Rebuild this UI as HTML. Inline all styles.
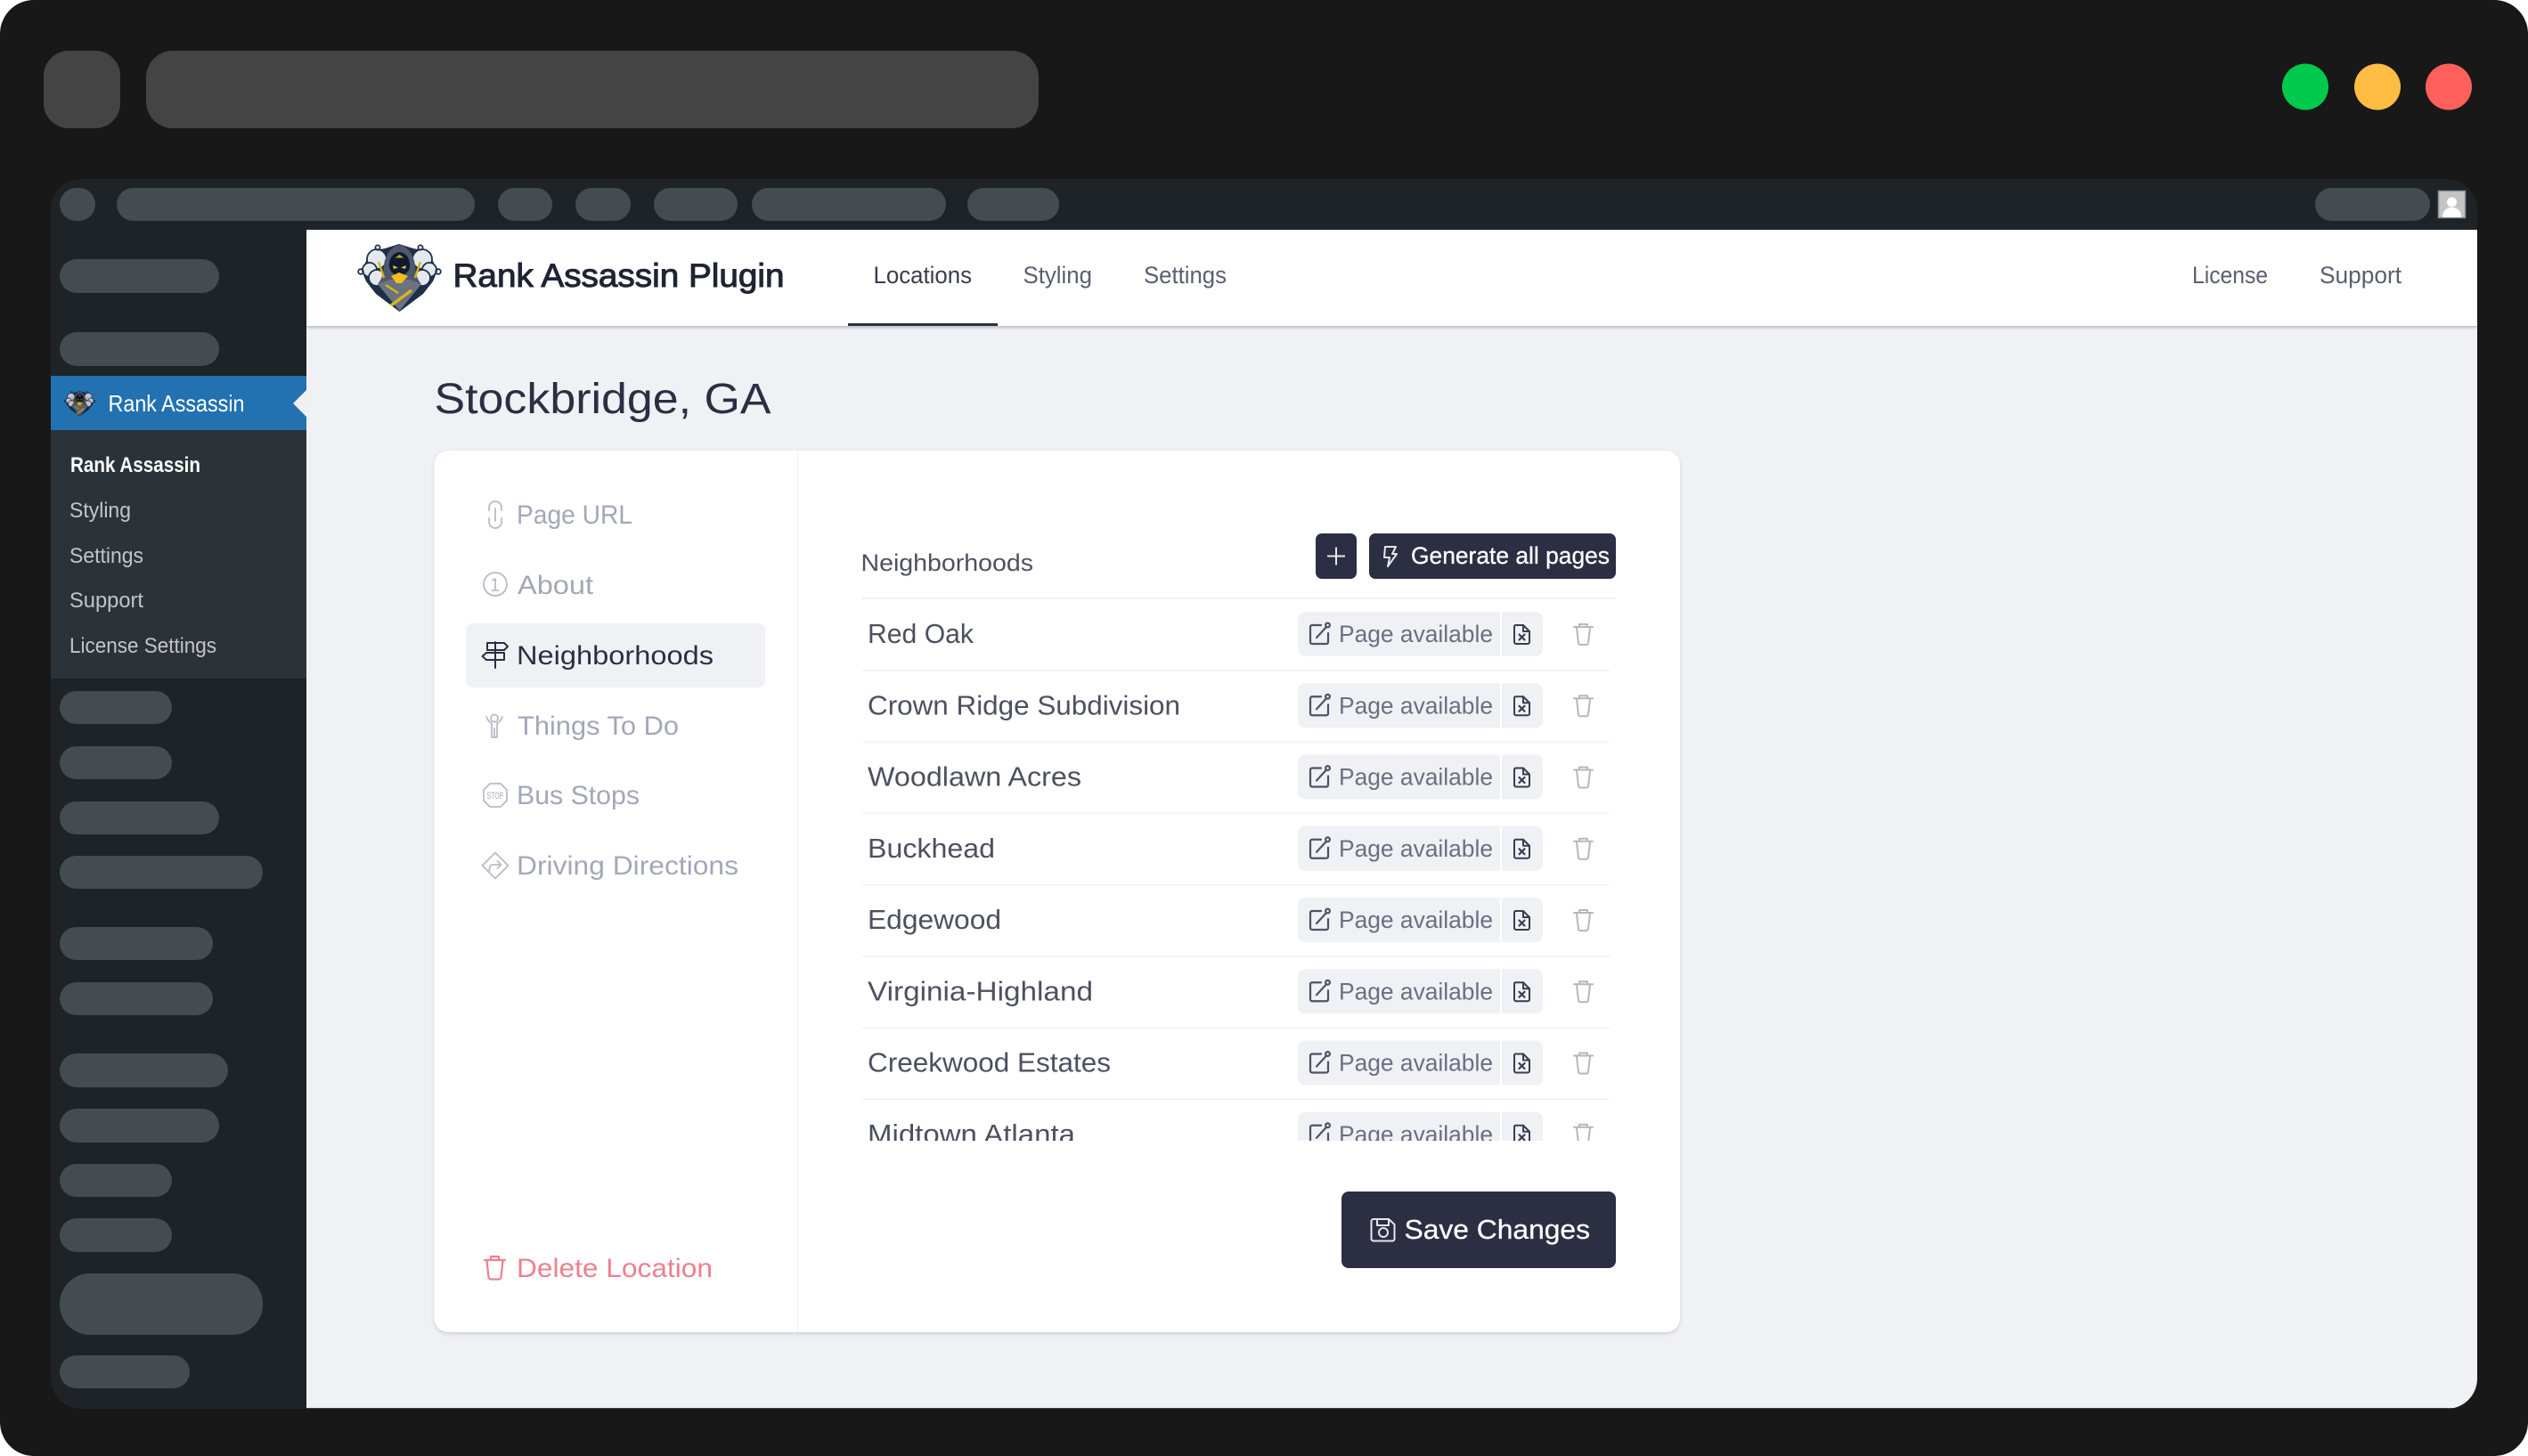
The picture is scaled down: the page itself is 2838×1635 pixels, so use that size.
<!DOCTYPE html>
<html lang="en">
<head>
<meta charset="utf-8">
<title>Rank Assassin Plugin</title>
<style>
html,body{margin:0;padding:0;background:#fff;width:2838px;height:1635px;overflow:hidden}
svg{display:block}
text{font-family:"Liberation Sans",sans-serif}
.bar{fill:#454c50}
.side{fill:#454c50}
.name{font-size:31px;fill:#4d5060}
.pa{font-size:26.500px;fill:#6b6f80}
.nav{font-size:30px;fill:#a3a7b8}
.tab{font-size:26.500px;fill:#5a5e70}
.sub{font-size:24px;fill:#c3c4c7}
.ic{fill:none;stroke-linecap:round;stroke-linejoin:round}
</style>
</head>
<body>
<svg xmlns="http://www.w3.org/2000/svg" width="2838" height="1635" viewBox="0 0 2838 1635">
<defs>
  <clipPath id="win"><rect x="57" y="201" width="2724" height="1381" rx="34"/></clipPath>
  <clipPath id="list"><rect x="960" y="660" width="860" height="621"/></clipPath>
  <filter id="sh" x="-5%" y="-5%" width="110%" height="110%"><feDropShadow dx="0" dy="2" stdDeviation="2" flood-color="#000" flood-opacity=".14"/></filter>
  <filter id="hs" x="-1%" y="-10%" width="102%" height="125%"><feDropShadow dx="0" dy="2" stdDeviation="1.500" flood-color="#000" flood-opacity=".22"/></filter>
  <filter id="dim"><feColorMatrix type="matrix" values=".68 0 0 0 0 0 .68 0 0 0 0 0 .72 0 0 0 0 0 1 0"/></filter>
  <g id="logo">
    <path d="M46.500 76L20 56 9 42 4 30 14 8 30 5 46 0 62 5 79 8 89 30 84 42 73 56Z" fill="#1e3048"/>
    <g stroke="#1e3048" stroke-width="1.800" fill="#e3e8ed">
      <circle cx="21" cy="17" r="11"/><circle cx="13" cy="29" r="8"/><circle cx="21" cy="38" r="9"/>
      <circle cx="72" cy="17" r="11"/><circle cx="80" cy="29" r="8"/><circle cx="72" cy="38" r="9"/>
    </g>
    <g fill="none" stroke="#1e3048" stroke-width="1.800"><circle cx="3" cy="31" r="2.800"/><circle cx="90" cy="31" r="2.800"/><circle cx="22" cy="4" r="2.600"/><circle cx="70" cy="4" r="2.600"/></g>
    <path d="M46.500 1C36 3 30 14 29 24 28 36 26 40 22 45L46.500 74 71 45C67 40 65 36 64 24 63 14 57 3 46.500 1Z" fill="#4f586c"/>
    <path d="M22 45L46.500 75 71 45 58 40H35Z" fill="#6b7280"/>
    <path d="M46.500 9C39 10 35 16 35 24 35 31 40 35 46.500 35 53 35 58 31 58 24 58 16 54 10 46.500 9Z" fill="#0e1a30"/>
    <path d="M39 24l6 2.500-5 1.500zM54 24l-6 2.500 5 1.500z" fill="#f1c21d"/>
    <path d="M37 36L46 32 56 36 49 44H43Z" fill="#f4bd1c"/>
    <path d="M60 52L37 69" stroke="#d9b61f" stroke-width="3.400" fill="none"/>
    <path d="M23 20l6 18M70 20l-6 18M31 46l14 9" stroke="#d9b61f" stroke-width="2.400" fill="none"/>
    <path d="M46.500 12l-5 3.500h10z" fill="#c8a818"/>
  </g>
  <g id="ext" class="ic" stroke="#4f5263" stroke-width="2.200">
    <path d="M1483 702H1473a2 2 0 0 0-2 2V721a2 2 0 0 0 2 2H1489a2 2 0 0 0 2-2V711"/>
    <path d="M1478 716L1489 704"/><circle cx="1490.500" cy="702" r="2.400"/>
  </g>
  <g id="filex" class="ic" stroke="#3a3d50" stroke-width="2">
    <path d="M1701 702H1710L1717 709V721a2 2 0 0 1-2 2H1702a2 2 0 0 1-2-2V703Z"/>
    <path d="M1710 702V709H1717"/>
    <path d="M1705.500 712.500L1711.500 718.500M1711.500 712.500L1705.500 718.500" stroke-width="2.200"/>
  </g>
  <g id="trash" class="ic" stroke="#b5b6c0" stroke-width="2">
    <path d="M1767 704H1788M1773 703.500V701H1782V703.500"/>
    <path d="M1770 705L1772 722a2 2 0 0 0 2 2H1781a2 2 0 0 0 2-2L1785 705"/>
  </g>
  <g id="pill">
    <rect x="1457" y="687" width="275" height="50" rx="8" fill="#f0f1f5"/>
    <rect x="1684" y="687" width="2" height="50" fill="#fff"/>
  </g>
</defs>

<rect width="2838" height="1635" rx="38" fill="#181818"/>

<rect x="49" y="57" width="86" height="87" rx="28" fill="#444"/>
<rect x="164" y="57" width="1002" height="87" rx="30" fill="#444"/>
<circle cx="2588" cy="97.500" r="26" fill="#00ca4e"/>
<circle cx="2669" cy="97.500" r="26" fill="#ffbd44"/>
<circle cx="2749" cy="97.500" r="26" fill="#ff605c"/>

<g clip-path="url(#win)">
  <rect x="57" y="201" width="2724" height="1381" fill="#1d2327"/>
  <rect x="344" y="258" width="2437" height="1324" fill="#f0f1f5"/>
  <rect x="344" y="1581" width="2437" height="1" fill="#3c3f44"/>

  <!-- admin bar -->
  <rect class="bar" x="67" y="211" width="40" height="37" rx="18.500"/>
  <rect class="bar" x="131" y="211" width="402" height="37" rx="18.500"/>
  <rect class="bar" x="559" y="211" width="61" height="37" rx="18.500"/>
  <rect class="bar" x="646" y="211" width="62" height="37" rx="18.500"/>
  <rect class="bar" x="734" y="211" width="94" height="37" rx="18.500"/>
  <rect class="bar" x="844" y="211" width="218" height="37" rx="18.500"/>
  <rect class="bar" x="1086" y="211" width="103" height="37" rx="18.500"/>
  <rect class="bar" x="2599" y="211" width="129" height="37" rx="18.500"/>
  <rect x="2737.500" y="214.500" width="30" height="30" fill="#c4c4c4" stroke="#8c8f94" stroke-width="1.500"/>
  <circle cx="2752.500" cy="227" r="5.500" fill="#fff"/>
  <path d="M2742 244c0-8 5-11 10.500-11s10.500 3 10.500 11z" fill="#fff"/>

  <!-- sidebar -->
  <rect class="side" x="67" y="291" width="179" height="38" rx="19"/>
  <rect class="side" x="67" y="373" width="179" height="38" rx="19"/>
  <rect x="57" y="422" width="287" height="61" fill="#2271b1"/>
  <g filter="url(#dim)"><use href="#logo" transform="translate(72 439) scale(.376)"/></g>
  <text x="121.500" y="462" font-size="26" fill="#fff" textLength="153" lengthAdjust="spacingAndGlyphs">Rank Assassin</text>
  <path d="M344 438L329 453 344 468Z" fill="#f0f0f1"/>
  <rect x="57" y="483" width="287" height="279" fill="#2c3338"/>
  <text x="79" y="530" font-size="24" font-weight="700" fill="#fff" textLength="146" lengthAdjust="spacingAndGlyphs">Rank Assassin</text>
  <text class="sub" x="78" y="581" textLength="69" lengthAdjust="spacingAndGlyphs">Styling</text>
  <text class="sub" x="78" y="632" textLength="83" lengthAdjust="spacingAndGlyphs">Settings</text>
  <text class="sub" x="78" y="682" textLength="83" lengthAdjust="spacingAndGlyphs">Support</text>
  <text class="sub" x="78" y="733" textLength="165" lengthAdjust="spacingAndGlyphs">License Settings</text>
  <rect class="side" x="67" y="776" width="126" height="37" rx="18.500"/>
  <rect class="side" x="67" y="838" width="126" height="37" rx="18.500"/>
  <rect class="side" x="67" y="900" width="179" height="37" rx="18.500"/>
  <rect class="side" x="67" y="961" width="228" height="37" rx="18.500"/>
  <rect class="side" x="67" y="1041" width="172" height="37" rx="18.500"/>
  <rect class="side" x="67" y="1103" width="172" height="37" rx="18.500"/>
  <rect class="side" x="67" y="1183" width="189" height="38" rx="19"/>
  <rect class="side" x="67" y="1245" width="179" height="38" rx="19"/>
  <rect class="side" x="67" y="1307" width="126" height="37" rx="18.500"/>
  <rect class="side" x="67" y="1368" width="126" height="38" rx="19"/>
  <rect class="side" x="67" y="1430" width="228" height="69" rx="34"/>
  <rect class="side" x="67" y="1522" width="146" height="37" rx="18.500"/>

  <!-- plugin header -->
  <rect x="344" y="258" width="2437" height="108" fill="#fff" filter="url(#hs)"/>
  <use href="#logo" transform="translate(402 274)"/>
  <text x="508.500" y="322" font-size="37" fill="#1f2433" stroke="#1f2433" stroke-width="1" textLength="372" lengthAdjust="spacingAndGlyphs">Rank Assassin Plugin</text>
  <text class="tab" x="980.500" y="318" style="fill:#3a3d4e" textLength="110.500" lengthAdjust="spacingAndGlyphs">Locations</text>
  <rect x="952" y="363" width="168" height="3" fill="#2c2e43"/>
  <text class="tab" x="1148.500" y="318" textLength="77.500" lengthAdjust="spacingAndGlyphs">Styling</text>
  <text class="tab" x="1284" y="318" textLength="93" lengthAdjust="spacingAndGlyphs">Settings</text>
  <text class="tab" x="2461" y="318" textLength="85" lengthAdjust="spacingAndGlyphs">License</text>
  <text class="tab" x="2604" y="318" textLength="92" lengthAdjust="spacingAndGlyphs">Support</text>

  <text x="487.500" y="464" font-size="48" fill="#2c2e43" textLength="378" lengthAdjust="spacingAndGlyphs">Stockbridge, GA</text>

  <!-- card -->
  <rect x="487.500" y="506" width="1398.500" height="990" rx="16" fill="#fff" filter="url(#sh)"/>
  <rect x="895" y="506" width="1" height="990" fill="#eff0f3"/>

  <!-- left nav -->
  <g class="ic" stroke="#b9bbc7" stroke-width="1.800">
    <path d="M549 573V570a7 7 0 0 1 14 0V573M549 582V586a7 7 0 0 0 14 0V582M556 571V585"/>
    <circle cx="556" cy="656" r="13"/>
    <path d="M553 651.500L556 650V663M552.500 663H559.500"/>
    <circle cx="555" cy="806.500" r="4"/>
    <path d="M546 805C548 810 551 812 552 812V828H558V812C559 812 562 810 564 805M555 818V828"/>
    <path d="M550 880H562L569 887V899L562 906H550L543 899V887Z"/>
    <path d="M556 957.500L570.500 972 556 986.500 541.500 972Z"/>
    <path d="M549.500 978V975a4 4 0 0 1 4-4H562M558.500 967L562.500 971 558.500 975"/>
  </g>
  <text x="556" y="897" font-size="11" fill="#a9abb9" text-anchor="middle" textLength="19" lengthAdjust="spacingAndGlyphs">STOP</text>
  <rect x="523" y="700" width="336" height="72" rx="8" fill="#f0f1f5"/>
  <g class="ic" stroke="#2c2e43" stroke-width="2">
    <path d="M556 721V750M547 722H566L570 726 566 730H547ZM566 733H546L541.500 737 546 741H566Z"/>
  </g>
  <text class="nav" x="580" y="588" textLength="130" lengthAdjust="spacingAndGlyphs">Page URL</text>
  <text class="nav" x="581" y="667" textLength="85" lengthAdjust="spacingAndGlyphs">About</text>
  <text class="nav" x="580" y="746" style="fill:#2c2e43" textLength="221" lengthAdjust="spacingAndGlyphs">Neighborhoods</text>
  <text class="nav" x="581" y="825" textLength="181" lengthAdjust="spacingAndGlyphs">Things To Do</text>
  <text class="nav" x="580" y="903" textLength="138" lengthAdjust="spacingAndGlyphs">Bus Stops</text>
  <text class="nav" x="580" y="982" textLength="249" lengthAdjust="spacingAndGlyphs">Driving Directions</text>
  <g class="ic" stroke="#ec8090" stroke-width="2.200">
    <path d="M544 1415H567M551 1414.500V1411H560V1414.500"/>
    <path d="M546.500 1416L548.500 1434a2.500 2.500 0 0 0 2.500 2.500H560a2.500 2.500 0 0 0 2.500-2.500L564.500 1416"/>
  </g>
  <text class="nav" x="580" y="1434" style="fill:#ec8090" textLength="220" lengthAdjust="spacingAndGlyphs">Delete Location</text>

  <!-- neighborhoods -->
  <text x="966.500" y="641" font-size="26.500" fill="#4d5060" textLength="193.500" lengthAdjust="spacingAndGlyphs">Neighborhoods</text>
  <rect x="1477" y="599" width="46" height="51" rx="7" fill="#2c2e43"/>
  <path d="M1490 624.500H1510M1500 614.500V634.500" stroke="#e6e7ec" stroke-width="2" fill="none"/>
  <rect x="1537" y="599" width="277" height="51" rx="7" fill="#2c2e43"/>
  <path class="ic" stroke="#e6e7ec" stroke-width="2" d="M1555 614H1567L1563 622H1568L1558 636 1560 626H1554Z"/>
  <text x="1584" y="633" font-size="26.500" fill="#fff" stroke="#fff" stroke-width=".3" textLength="223" lengthAdjust="spacingAndGlyphs">Generate all pages</text>
  <rect x="968" y="671" width="846" height="2" fill="#f1f2f5"/>

  <g clip-path="url(#list)">
    <rect x="968" y="752" width="839" height="1.500" fill="#f1f2f5"/>
    <rect x="968" y="832.500" width="839" height="1.500" fill="#f1f2f5"/>
    <rect x="968" y="912.500" width="839" height="1.500" fill="#f1f2f5"/>
    <rect x="968" y="993" width="839" height="1.500" fill="#f1f2f5"/>
    <rect x="968" y="1073" width="839" height="1.500" fill="#f1f2f5"/>
    <rect x="968" y="1153.500" width="839" height="1.500" fill="#f1f2f5"/>
    <rect x="968" y="1233.500" width="839" height="1.500" fill="#f1f2f5"/>

    <g><use href="#pill"/><use href="#ext"/><use href="#filex"/><use href="#trash"/>
      <text class="name" x="974" y="722" textLength="119" lengthAdjust="spacingAndGlyphs">Red Oak</text>
      <text class="pa" x="1503" y="721" textLength="173" lengthAdjust="spacingAndGlyphs">Page available</text></g>
    <g transform="translate(0 80.250)"><use href="#pill"/><use href="#ext"/><use href="#filex"/><use href="#trash"/>
      <text class="name" x="974" y="722" textLength="351" lengthAdjust="spacingAndGlyphs">Crown Ridge Subdivision</text>
      <text class="pa" x="1503" y="721" textLength="173" lengthAdjust="spacingAndGlyphs">Page available</text></g>
    <g transform="translate(0 160.500)"><use href="#pill"/><use href="#ext"/><use href="#filex"/><use href="#trash"/>
      <text class="name" x="974" y="722" textLength="240" lengthAdjust="spacingAndGlyphs">Woodlawn Acres</text>
      <text class="pa" x="1503" y="721" textLength="173" lengthAdjust="spacingAndGlyphs">Page available</text></g>
    <g transform="translate(0 240.750)"><use href="#pill"/><use href="#ext"/><use href="#filex"/><use href="#trash"/>
      <text class="name" x="974" y="722" textLength="143" lengthAdjust="spacingAndGlyphs">Buckhead</text>
      <text class="pa" x="1503" y="721" textLength="173" lengthAdjust="spacingAndGlyphs">Page available</text></g>
    <g transform="translate(0 321)"><use href="#pill"/><use href="#ext"/><use href="#filex"/><use href="#trash"/>
      <text class="name" x="974" y="722" textLength="150" lengthAdjust="spacingAndGlyphs">Edgewood</text>
      <text class="pa" x="1503" y="721" textLength="173" lengthAdjust="spacingAndGlyphs">Page available</text></g>
    <g transform="translate(0 401.250)"><use href="#pill"/><use href="#ext"/><use href="#filex"/><use href="#trash"/>
      <text class="name" x="974" y="722" textLength="253" lengthAdjust="spacingAndGlyphs">Virginia-Highland</text>
      <text class="pa" x="1503" y="721" textLength="173" lengthAdjust="spacingAndGlyphs">Page available</text></g>
    <g transform="translate(0 481.500)"><use href="#pill"/><use href="#ext"/><use href="#filex"/><use href="#trash"/>
      <text class="name" x="974" y="722" textLength="273" lengthAdjust="spacingAndGlyphs">Creekwood Estates</text>
      <text class="pa" x="1503" y="721" textLength="173" lengthAdjust="spacingAndGlyphs">Page available</text></g>
    <g transform="translate(0 561.750)"><use href="#pill"/><use href="#ext"/><use href="#filex"/><use href="#trash"/>
      <text class="name" x="974" y="722" textLength="233" lengthAdjust="spacingAndGlyphs">Midtown Atlanta</text>
      <text class="pa" x="1503" y="721" textLength="173" lengthAdjust="spacingAndGlyphs">Page available</text></g>
  </g>

  <!-- save -->
  <rect x="1506" y="1338" width="308" height="86" rx="8" fill="#2c2e43"/>
  <g class="ic" stroke="#e6e7ec" stroke-width="2">
    <path d="M1542 1369H1559L1565.500 1375V1391a2.500 2.500 0 0 1-2.500 2.500H1542a2.500 2.500 0 0 1-2.500-2.500V1371.500a2.500 2.500 0 0 1 2.500-2.500Z"/>
    <path d="M1546 1369V1376H1559V1369"/>
    <circle cx="1553" cy="1384" r="5"/>
  </g>
  <text x="1576.500" y="1391" font-size="31" fill="#fff" stroke="#fff" stroke-width=".3" textLength="208.500" lengthAdjust="spacingAndGlyphs">Save Changes</text>
</g>
</svg>
</body>
</html>
